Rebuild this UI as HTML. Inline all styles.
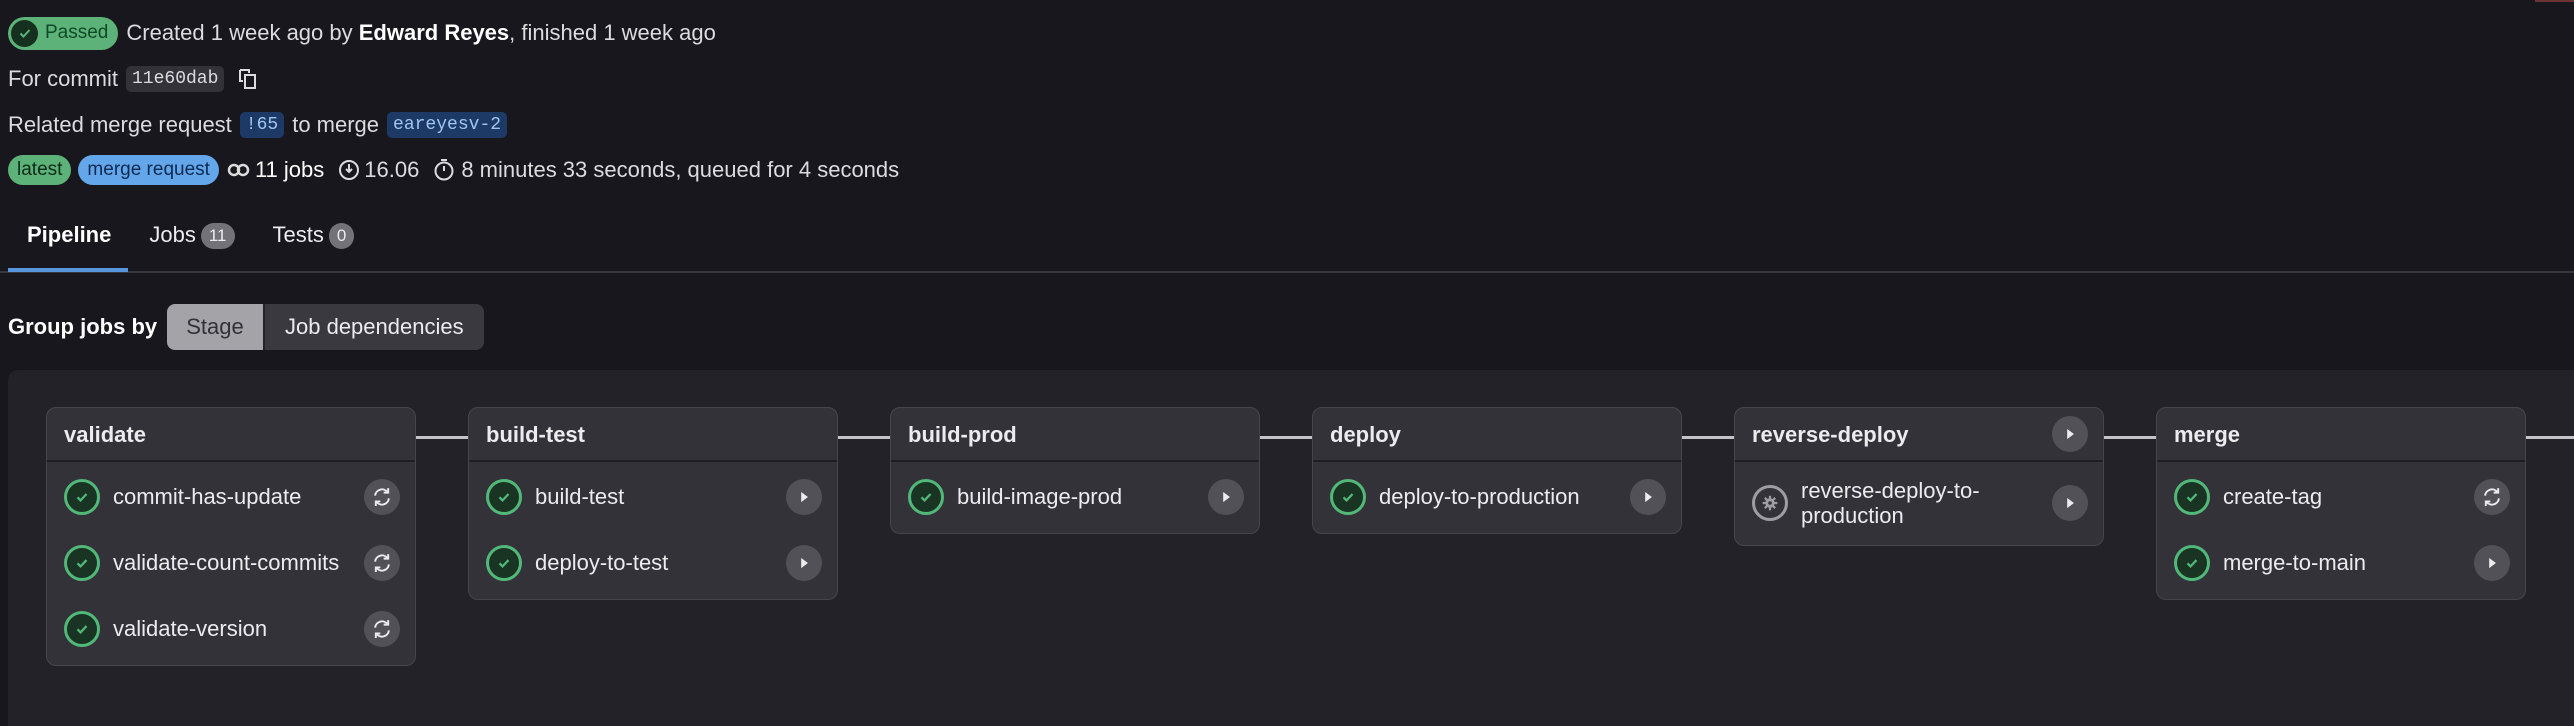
<!DOCTYPE html>
<html><head><meta charset="utf-8"><style>
*{box-sizing:border-box;margin:0;padding:0}
html{width:2574px;height:726px;overflow:hidden;background:#18171d}
body{width:2574px;height:726px;background:#18171d;color:#ececef;font-family:"Liberation Sans",sans-serif;font-size:22px;position:relative;overflow:hidden}
.a{position:absolute;white-space:nowrap}
.line{height:34px;line-height:34px;display:flex;align-items:center;gap:8px}
.code{font-family:"Liberation Mono",monospace;font-size:18px;background:#333238;color:#dcdcde;border-radius:5px;padding:2px 6px;line-height:22px}
.blue{background:#1d3a66;color:#9dc7f1}
.pill{border-radius:16px;padding:0 9px;height:30px;line-height:30px;font-size:19px;color:#0a2a18}
.tabs span.cnt{display:inline-block;background:#737278;color:#ececef;border-radius:14px;font-size:17px;padding:0 8px;height:26px;line-height:26px;margin-left:5px;vertical-align:middle}
.cont{position:absolute;left:8px;top:370px;width:2566px;height:356px;background:#232229;border-radius:10px 0 0 0}
.card{position:absolute;top:407px;width:370px;background:#333238;border:1px solid #46454c;border-radius:10px}
.hd{height:54px;border-bottom:2px solid #1f1e24;padding-left:17px;line-height:54px;font-weight:bold;font-size:22px;position:relative}
.bd{padding:2px 0 3px}
.row{height:66px;display:flex;align-items:center;padding-left:17px;position:relative;font-size:22px}
.st{width:36px;height:36px;border-radius:50%;border:3px solid #52b87a;background:#1a3424;margin-right:13px;flex:none;display:flex;align-items:center;justify-content:center}
.btn{position:absolute;right:15px;top:50%;margin-top:-18px;width:36px;height:36px;border-radius:50%;background:#535158;display:flex;align-items:center;justify-content:center}
.conn{position:absolute;top:436px;height:3px;background:#c4c3c8}
</style></head><body>
<div class="a" style="left:2535px;top:0;width:39px;height:2px;background:#6b3333"></div>

<div class="a line" style="left:8px;top:16px">
 <span style="display:inline-flex;align-items:center;background:#5cb278;border-radius:17px;height:33px;padding:0 10px 0 3px;color:#0e4a27;font-size:19px"><span style="width:27px;height:27px;border-radius:50%;background:#16301f;display:inline-flex;align-items:center;justify-content:center;margin-right:7px"><svg width="16" height="16" viewBox="0 0 16 16"><path d="M3.5 8.5l3 3 6-6.5" stroke="#5cb278" stroke-width="2" fill="none"/></svg></span>Passed</span>
 <span style="color:#dcdcde">Created 1 week ago by <b style="color:#fff">Edward Reyes</b>, finished 1 week ago</span>
</div>
<div class="a line" style="left:8px;top:62px;color:#dcdcde">For commit <span class="code">11e60dab</span>
 <svg width="24" height="24" viewBox="0 0 24 24" style="margin-left:4px"><path d="M4 3h9v3M4 3v11h3" stroke="#dcdcde" stroke-width="2" fill="none"/><rect x="9" y="8" width="10" height="13" stroke="#dcdcde" stroke-width="2" fill="none"/></svg></div>
<div class="a line" style="left:8px;top:108px;color:#dcdcde">Related merge request <span class="code blue">!65</span> to merge <span class="code blue">eareyesv-2</span></div>
<div class="a line" style="left:8px;top:153px;color:#dcdcde;gap:7px">
 <span class="pill" style="background:#5cb278">latest</span>
 <span class="pill" style="background:#63a6e9;color:#0b2a52">merge request</span>
 <svg width="26" height="20" viewBox="0 0 26 20"><circle cx="8" cy="10" r="5" stroke="#dcdcde" stroke-width="2.5" fill="none"/><circle cx="17" cy="10" r="5" stroke="#dcdcde" stroke-width="2.5" fill="none"/></svg><span style="color:#fff;margin-left:-4px">11 jobs</span>
 <svg width="24" height="24" viewBox="0 0 24 24" style="margin-left:6px"><circle cx="12" cy="12" r="9" stroke="#dcdcde" stroke-width="2" fill="none"/><path d="M12 6v8M9 11l3 3 3-3" stroke="#dcdcde" stroke-width="2" fill="none"/></svg><span style="margin-left:-4px">16.06</span>
 <svg width="24" height="24" viewBox="0 0 24 24" style="margin-left:6px"><circle cx="12" cy="13" r="8.5" stroke="#dcdcde" stroke-width="2" fill="none"/><path d="M12 8v5M9 2h6" stroke="#dcdcde" stroke-width="2" fill="none"/></svg><span style="margin-left:-2px">8 minutes 33 seconds, queued for 4 seconds</span>
</div>

<div class="a tabs" style="left:27px;top:218px;height:34px;line-height:34px">
 <b style="color:#fff">Pipeline</b><span style="margin-left:38px">Jobs<span class="cnt">11</span></span><span style="margin-left:38px">Tests<span class="cnt">0</span></span>
</div>
<div class="a" style="left:0;top:271px;width:2574px;height:2px;background:#3a3940"></div>
<div class="a" style="left:8px;top:268px;width:120px;height:4px;background:#5897dd"></div>

<div class="a" style="left:8px;top:310px;line-height:34px;font-weight:bold;color:#fff">Group jobs by</div>
<div class="a" style="left:167px;top:304px;height:46px;display:flex;border-radius:8px;overflow:hidden">
 <div style="background:#a4a3a8;color:#333238;width:96px;text-align:center;line-height:46px">Stage</div>
 <div style="background:#3a393f;color:#ececef;padding:0 20px;line-height:46px;border-left:2px solid #232229">Job dependencies</div>
</div>

<div class="cont"></div>

<div class="conn" style="left:416px;width:52px"></div>
<div class="conn" style="left:838px;width:52px"></div>
<div class="conn" style="left:1260px;width:52px"></div>
<div class="conn" style="left:1682px;width:52px"></div>
<div class="conn" style="left:2104px;width:52px"></div>
<div class="conn" style="left:2526px;width:48px"></div>

<svg width="0" height="0" style="position:absolute"><defs>
<symbol id="ok" viewBox="0 0 16 16"><path d="M4 8.3l2.7 2.7 5.3-5.6" stroke="#52b87a" stroke-width="2" fill="none"/></symbol>
<symbol id="play" viewBox="0 0 16 16"><path d="M5.5 3.5v9l6-4.5z" fill="#ececef"/></symbol>
<symbol id="retry" viewBox="0 0 16 16"><path d="M3 7a5 5 0 0 1 9-2.5M13 9a5 5 0 0 1-9 2.5" stroke="#ececef" stroke-width="1.4" fill="none"/><path d="M12.5 1.5v3.3H9.2M3.5 14.5v-3.3h3.3" stroke="#ececef" stroke-width="1.4" fill="none"/></symbol>
</defs></svg>

<div class="card" style="left:46px">
 <div class="hd">validate</div>
 <div class="bd">
  <div class="row"><span class="st"><svg width="18" height="18"><use href="#ok"/></svg></span>commit-has-update<span class="btn"><svg width="22" height="22"><use href="#retry"/></svg></span></div>
  <div class="row"><span class="st"><svg width="18" height="18"><use href="#ok"/></svg></span>validate-count-commits<span class="btn"><svg width="22" height="22"><use href="#retry"/></svg></span></div>
  <div class="row"><span class="st"><svg width="18" height="18"><use href="#ok"/></svg></span>validate-version<span class="btn"><svg width="22" height="22"><use href="#retry"/></svg></span></div>
 </div>
</div>
<div class="card" style="left:468px">
 <div class="hd">build-test</div>
 <div class="bd">
  <div class="row"><span class="st"><svg width="18" height="18"><use href="#ok"/></svg></span>build-test<span class="btn"><svg width="18" height="18"><use href="#play"/></svg></span></div>
  <div class="row"><span class="st"><svg width="18" height="18"><use href="#ok"/></svg></span>deploy-to-test<span class="btn"><svg width="18" height="18"><use href="#play"/></svg></span></div>
 </div>
</div>
<div class="card" style="left:890px">
 <div class="hd">build-prod</div>
 <div class="bd">
  <div class="row"><span class="st"><svg width="18" height="18"><use href="#ok"/></svg></span>build-image-prod<span class="btn"><svg width="18" height="18"><use href="#play"/></svg></span></div>
 </div>
</div>
<div class="card" style="left:1312px">
 <div class="hd">deploy</div>
 <div class="bd">
  <div class="row"><span class="st"><svg width="18" height="18"><use href="#ok"/></svg></span>deploy-to-production<span class="btn"><svg width="18" height="18"><use href="#play"/></svg></span></div>
 </div>
</div>
<div class="card" style="left:1734px">
 <div class="hd">reverse-deploy<span class="btn" style="right:15px"><svg width="18" height="18"><use href="#play"/></svg></span></div>
 <div class="bd">
  <div class="row" style="height:78px;line-height:25px"><span class="st" style="border-color:#9e9da3;background:#333238"><svg width="18" height="18" viewBox="0 0 16 16"><circle cx="8" cy="8" r="4.2" fill="#9e9da3"/><circle cx="8" cy="8" r="1.6" fill="#333238"/><path d="M8 1.5v3M8 11.5v3M1.5 8h3M11.5 8h3M3.4 3.4l2.1 2.1M10.5 10.5l2.1 2.1M3.4 12.6l2.1-2.1M10.5 5.5l2.1-2.1" stroke="#9e9da3" stroke-width="2"/></svg></span><span style="white-space:normal">reverse-deploy-to-<br>production</span><span class="btn"><svg width="18" height="18"><use href="#play"/></svg></span></div>
 </div>
</div>
<div class="card" style="left:2156px">
 <div class="hd">merge</div>
 <div class="bd">
  <div class="row"><span class="st"><svg width="18" height="18"><use href="#ok"/></svg></span>create-tag<span class="btn"><svg width="22" height="22"><use href="#retry"/></svg></span></div>
  <div class="row"><span class="st"><svg width="18" height="18"><use href="#ok"/></svg></span>merge-to-main<span class="btn"><svg width="18" height="18"><use href="#play"/></svg></span></div>
 </div>
</div>
</body></html>
